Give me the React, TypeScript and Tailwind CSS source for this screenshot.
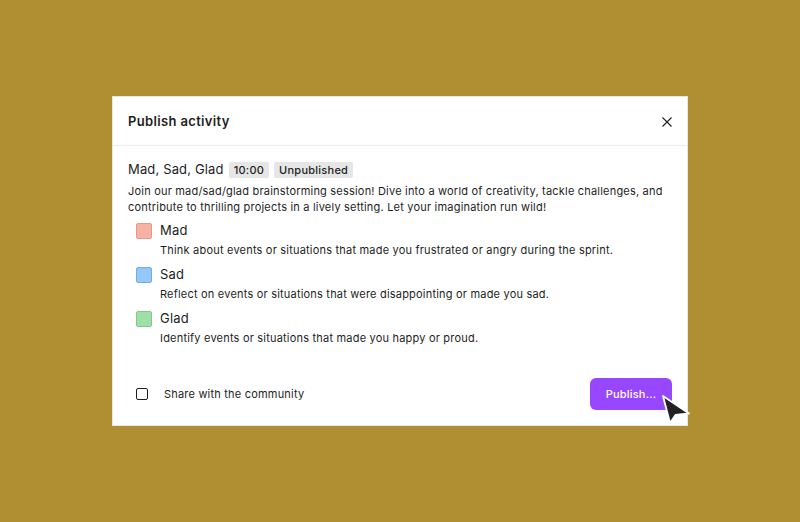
import React from "react";

const items = [
  {
    name: "Mad",
    desc: "Think about events or situations that made you frustrated or angry during the sprint.",
    cls: "bg-[#f7b2a5] border-[#e49a8c]",
  },
  {
    name: "Sad",
    desc: "Reflect on events or situations that were disappointing or made you sad.",
    cls: "bg-[#94c9f7] border-[#72aee6]",
  },
  {
    name: "Glad",
    desc: "Identify events or situations that made you happy or proud.",
    cls: "bg-[#9fdfa8] border-[#7fca8a]",
  },
];

export default function App() {
  return (
    <div
      className="w-[800px] h-[522px] bg-[#b08f33] flex items-start justify-center pt-[96px] text-[#1e1e1e]"
      style={{ fontFamily: "Inter, 'Noto Sans', sans-serif" }}
    >
      <div className="relative w-[576px] h-[330px] bg-white border border-[#e6e6e6] flex flex-col">
        <div className="h-[49px] flex items-center justify-between pl-[15px] pr-[12px] pt-[1px] border-b border-[#ececec]">
          <div className="text-[13px] font-semibold tracking-[0.35px]">Publish activity</div>
          <svg width="16" height="16" viewBox="0 0 16 16" className="text-[#1e1e1e]">
            <path d="M3.5 3.5 L12.5 12.5 M12.5 3.5 L3.5 12.5" stroke="currentColor" strokeWidth="1.1" fill="none" />
          </svg>
        </div>
        <div className="px-[15px] pt-[15px] flex flex-col">
          <div className="flex items-center gap-[5px] h-[18px]">
            <span className="text-[13px] tracking-[0.15px]">Mad, Sad, Glad</span>
            <span className="bg-[#e6e6e6] rounded-[2px] px-[5px] text-[11px] tracking-[0.25px] leading-[16px] font-medium">10:00</span>
            <span className="bg-[#e6e6e6] rounded-[2px] px-[5px] text-[11px] tracking-[0.25px] leading-[16px] font-medium">Unpublished</span>
          </div>
          <p className="text-[11px] tracking-[0.2px] leading-[16px] mt-[4px] text-[#1e1e1e]">
            Join our mad/sad/glad brainstorming session! Dive into a world of creativity, tackle challenges, and
            contribute to thrilling projects in a lively setting. Let your imagination run wild!
          </p>
          <div className="flex flex-col mt-[4px] pl-[8px]">
            {items.map((it) => (
              <div key={it.name} className="flex flex-col h-[44px]">
                <div className="flex items-center gap-[8px] h-[23px]">
                  <div className={`w-[16px] h-[16px] rounded-[2px] border ${it.cls}`} />
                  <span className="text-[13px] tracking-[0.2px]">{it.name}</span>
                </div>
                <div className="pl-[24px] text-[11px] tracking-[0.2px] leading-[16px] text-[#1e1e1e]">{it.desc}</div>
              </div>
            ))}
          </div>
        </div>
        <div className="mt-auto h-[64px] flex items-center justify-between pl-[23px] pr-[15px] pt-[2px]">
          <div className="flex items-center gap-[16px]">
            <div className="w-[12px] h-[12px] border border-[#1e1e1e] rounded-[2px]" />
            <span className="text-[11px] tracking-[0.2px]">Share with the community</span>
          </div>
          <button className="w-[82px] h-[32px] rounded-[6px] bg-[#9747ff] text-white text-[11px] tracking-[0.2px] font-medium">
            Publish...
          </button>
        </div>
        <svg
          className="absolute left-[547px] top-[296px]"
          width="34"
          height="36"
          viewBox="0 0 34 36"
        >
          <path
            d="M3 3 L10 30 L15.5 22 L29 20.5 Z"
            fill="#222"
            stroke="white"
            strokeWidth="1.8"
            strokeLinejoin="round"
          />
        </svg>
      </div>
    </div>
  );
}
